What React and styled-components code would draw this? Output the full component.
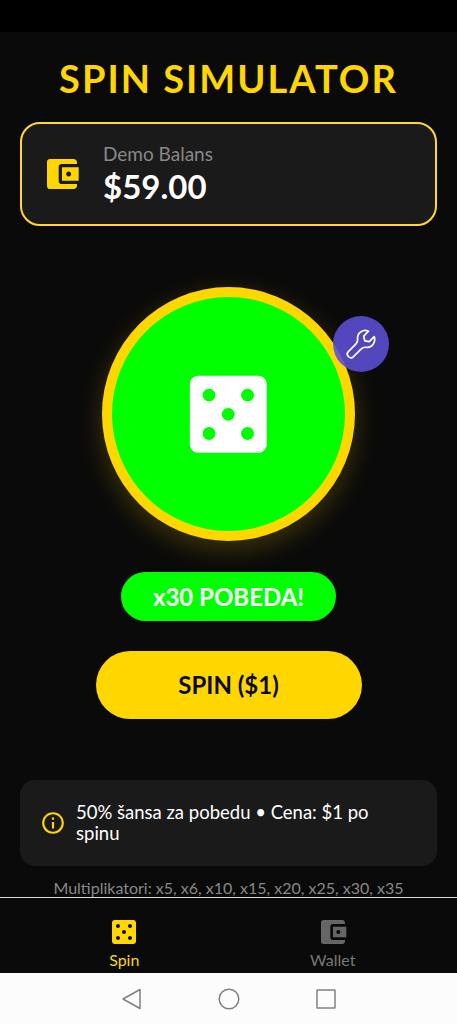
import React from "react";
import styled, { createGlobalStyle } from "styled-components";
import { MdAccountBalanceWallet, MdCasino, MdInfoOutline } from "react-icons/md";

const GlobalStyle = createGlobalStyle`
  * {
    box-sizing: border-box;
  }
  body {
    margin: 0;
    background: #0a0a0a;
    font-family: Lato, "Open Sans", sans-serif;
  }
  svg {
    display: block;
    flex-shrink: 0;
  }
`;

const Phone = styled.div`
  display: flex;
  flex-direction: column;
  width: 457px;
  height: 1024px;
  overflow: hidden;
  background: #0a0a0a;
`;

const StatusBar = styled.div`
  flex: 0 0 32px;
  background: #000;
`;

const Screen = styled.main`
  flex: 0 0 865px;
  display: flex;
  flex-direction: column;
  align-items: center;
  padding: 24px 20px 0;
  overflow: hidden;
`;

const Text = styled.span`
  display: block;
  white-space: nowrap;
  color: ${props => props.$color || "#fff"};
  font-size: ${props => props.$size}px;
  line-height: ${props => props.$line}px;
  font-weight: ${props => props.$bold ? 700 : 400};
  letter-spacing: ${props => props.$track || 0}px;
`;

const Title = styled.h1`
  margin: 0 0 22px;
  color: #ffd700;
  font-size: 38px;
  line-height: 44px;
  font-weight: 700;
  letter-spacing: 2px;
  white-space: nowrap;
`;

const BalanceCard = styled.section`
  display: flex;
  align-items: center;
  gap: 21px;
  width: 100%;
  height: 110px;
  padding: 0 20px;
  border: 2.6px solid #ffd930;
  border-radius: 20px;
  background: #1a1a1a;
`;

const WheelArea = styled.div`
  position: relative;
  margin-top: 61px;
`;

const Wheel = styled.div`
  display: flex;
  align-items: center;
  justify-content: center;
  width: 253px;
  height: 254px;
  border: 10.5px solid #ffd700;
  border-radius: 50%;
  background: #0f0;
  color: #fff;
  box-shadow: 0 8px 26px rgba(255, 215, 0, 0.22);
`;

const ToolBubble = styled.div`
  position: absolute;
  top: 29px;
  left: 231px;
  width: 56px;
  height: 56px;
  border-radius: 50%;
  background: rgba(92, 78, 214, 0.88);
`;

const Pill = styled.div`
  display: flex;
  align-items: center;
  justify-content: center;
  width: ${props => props.$width}px;
  height: ${props => props.$height}px;
  margin-top: ${props => props.$top}px;
  border-radius: 36px;
  background: ${props => props.$bg};
`;

const InfoCard = styled.section`
  display: flex;
  align-items: center;
  gap: 10px;
  flex-shrink: 0;
  width: 100%;
  height: 86px;
  margin: 61px 0 12px;
  padding: 0 20px;
  border-radius: 15px;
  background: #1a1a1a;
`;

const TabBar = styled.nav`
  flex: 0 0 76px;
  display: flex;
  padding: 0 20px;
  border-top: 1px solid #d8dcd8;
  background: #0a0a0a;
`;

const Tab = styled.div`
  flex: 1;
  display: flex;
  flex-direction: column;
  align-items: center;
  padding-top: 18px;
  color: ${props => props.$active ? "#ffd700" : "#666"};
`;

const SystemNav = styled.div`
  flex: 1;
  display: flex;
  justify-content: center;
  align-items: center;
  gap: 73px;
  background: #fcfcfc;
`;

const Wrench = () => (
  <svg width="56" height="56" viewBox="0 0 56 56" fill="none" stroke="#fff" strokeWidth="1.7" strokeLinejoin="round">
    <path d="M35.5 15.2C30 12.8 23.8 17 24.6 23.2Q25 26 22.8 28.1L15.3 35.6C12.3 38.6 16.7 44 20.3 40.8L28 33.2Q30 31 33 31.3C38.6 32 43.2 26.6 41.2 20.6L36.3 25.6L31.8 24.8L30.7 20.2Z" />
  </svg>
);

const navIcon = { width: 24, height: 24, viewBox: "0 0 24 24", fill: "none", stroke: "#808080", strokeWidth: 1.5, strokeLinejoin: "round" };

const App = () => {
  return (
    <>
      <GlobalStyle />
      <Phone>
        <StatusBar />
        <Screen>
          <Title>SPIN SIMULATOR</Title>
          <BalanceCard>
            <MdAccountBalanceWallet size={40} color="#ffd700" />
            <div>
              <Text $size={19} $line={24} $color="#888">Demo Balans</Text>
              <Text $size={33} $line={40} $bold>$59.00</Text>
            </div>
          </BalanceCard>

          <WheelArea>
            <Wheel>
              <MdCasino size={102.6} />
            </Wheel>
            <ToolBubble>
              <Wrench />
            </ToolBubble>
          </WheelArea>

          <Pill $width={215} $height={52} $top={31} $bg="#0f0">
            <Text $size={24} $line={30} $bold>x30 POBEDA!</Text>
          </Pill>
          <Pill $width={266} $height={72} $top={30} $bg="#ffd700">
            <Text $size={24} $line={30} $color="#0a0a0a" $bold>SPIN ($1)</Text>
          </Pill>

          <InfoCard>
            <MdInfoOutline size={26} color="#ffd700" />
            <div>
              <Text $size={18.5} $line={21}>50% šansa za pobedu • Cena: $1 po</Text>
              <Text $size={18.5} $line={21}>spinu</Text>
            </div>
          </InfoCard>
          <Text $size={16} $line={19} $color="#888">
            Multiplikatori: x5, x6, x10, x15, x20, x25, x30, x35
          </Text>
        </Screen>

        <TabBar>
          <Tab $active>
            <MdCasino size={32} />
            <Text $size={16} $line={24} $color="#ffd700">Spin</Text>
          </Tab>
          <Tab>
            <MdAccountBalanceWallet size={32} />
            <Text $size={16} $line={24} $color="#777">Wallet</Text>
          </Tab>
        </TabBar>

        <SystemNav>
          <svg {...navIcon}><path d="M20 2.5V21.5L3 12Z" /></svg>
          <svg {...navIcon}><circle cx="12" cy="12" r="9.8" /></svg>
          <svg {...navIcon}><rect x="3" y="3" width="18" height="18" rx="0.6" /></svg>
        </SystemNav>
      </Phone>
    </>
  );
};

export default App;
